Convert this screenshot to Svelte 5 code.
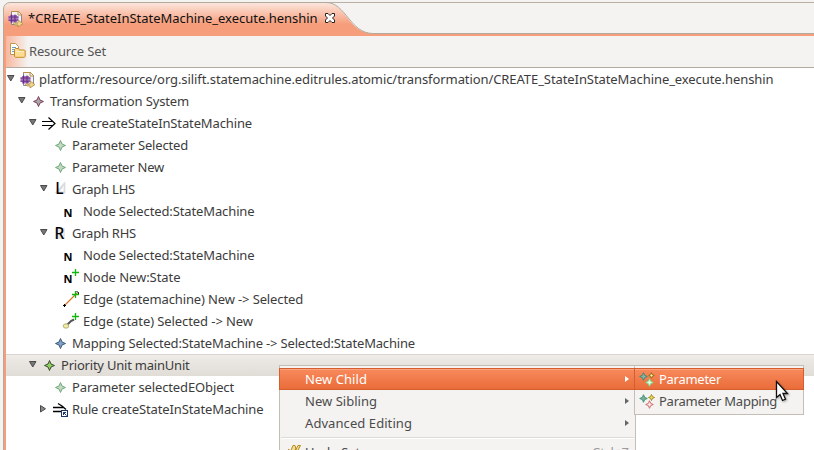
<script>
  const rows = [
    { level: 0, arrow: 'open', icon: 'file', text: 'platform:/resource/org.silift.statemachine.editrules.atomic/transformation/CREATE_StateInStateMachine_execute.henshin', end: 772.5 },
    { level: 1, arrow: 'open', icon: 'system', text: 'Transformation System', end: 188 },
    { level: 2, arrow: 'open', icon: 'rule', text: 'Rule createStateInStateMachine', end: 251 },
    { level: 3, icon: 'param', text: 'Parameter Selected', end: 187 },
    { level: 3, icon: 'param', text: 'Parameter New', end: 163 },
    { level: 3, arrow: 'open', icon: 'lhs', text: 'Graph LHS', end: 134 },
    { level: 4, icon: 'node', text: 'Node Selected:StateMachine', end: 253.5 },
    { level: 3, arrow: 'open', icon: 'rhs', text: 'Graph RHS', end: 135 },
    { level: 4, icon: 'node', text: 'Node Selected:StateMachine', end: 253.5 },
    { level: 4, icon: 'nodeNew', text: 'Node New:State', end: 179.5 },
    { level: 4, icon: 'edge', text: 'Edge (statemachine) New -> Selected', end: 302 },
    { level: 4, icon: 'edgeState', text: 'Edge (state) Selected -> New', end: 252 },
    { level: 3, icon: 'mapping', text: 'Mapping Selected:StateMachine -> Selected:StateMachine', end: 414 },
    { level: 2, arrow: 'open', icon: 'unit', text: 'Priority Unit mainUnit', end: 188.5, selected: true },
    { level: 3, icon: 'param', text: 'Parameter selectedEObject', end: 233 },
    { level: 3, arrow: 'closed', icon: 'ruleRef', text: 'Rule createStateInStateMachine', end: 262.5 }
  ];

  const diamonds = {
    system: ['#7e4058', '#aaa6aa'],
    param: ['#6fab78', '#c3d9c4'],
    mapping: ['#3f5877', '#7fa0c6'],
    unit: ['#3d4a38', '#8fcf5c']
  };

  // Spreads the letters of a label over a fixed width.
  function fit(node, width) {
    const apply = () => {
      node.style.letterSpacing = '0px';
      const natural = node.getBoundingClientRect().width;
      node.style.letterSpacing = (width - natural) / node.textContent.length + 'px';
    };
    apply();
    document.fonts?.ready.then(apply);
  }
</script>

{#snippet plus(x, y)}
  <path d="M{x - 3.5} {y}h7M{x} {y - 3.5}v7" stroke="#12b60c" stroke-width="1.3" fill="none" />
{/snippet}

{#snippet star(x, y, r, stroke, fill)}
  <path
    d="M{x} {y - r}l{r * 0.3} {r * 0.7} {r * 0.7} {r * 0.3}-{r * 0.7} {r * 0.3}-{r * 0.3} {r * 0.7}-{r * 0.3}-{r * 0.7}-{r * 0.7}-{r * 0.3} {r * 0.7}-{r * 0.3}z"
    {fill} {stroke} stroke-width="1" />
{/snippet}

{#snippet fileGlyph()}
  <path d="M5.5 4.5h7l3 3v10h-10z" fill="#f3f3f6" stroke="#8b8794" />
  <path d="M12 4.5v3.5h3.5M5.5 4.5h7l3 3" fill="none" stroke="#b89044" />
  <path d="M4 8h7v1.5h1.5v4h-1.5v2h-7v-2h-1.5v-4h1.5z" fill="#a878bc" />
  <path d="M5.5 7.5v8M9 7.5v8M2.5 10h10M2.5 13.2h10" stroke="#663088" stroke-width="1.1" />
  <path d="M8.5 15.5q1 1.5 3.5 .5v-3l5 3.6-5 3.4v-2q-3.5.5-4.5-1.5z" fill="#efd58c" stroke="#ae8b45" stroke-width=".8" />
{/snippet}

{#snippet icon(name)}
  <svg class="icon" width="21" height="22" viewBox="0 0 21 22">
    {#if name === 'file'}
      {@render fileGlyph()}
    {:else if diamonds[name]}
      {@render star(9.5, 11.5, 5, diamonds[name][0], diamonds[name][1])}
    {:else if name === 'rule'}
      <path d="M2 9.5h11M2 13.5h11M8.5 5.5l6.500 6-6.500 6" fill="none" stroke="#000" stroke-width="1.2" />
    {:else if name === 'ruleRef'}
      <path d="M2 9.500h11M2 13.500h8M7 5.500l4 2.500 4 3.500" fill="none" stroke="#000" stroke-width="1.300" />
      <rect x="10.500" y="12.500" width="6" height="6" fill="#fff" stroke="#193764" />
      <path d="M12.500 17v-2.500h2.500M12.500 14.500l3 3" fill="none" stroke="#193764" />
    {:else if name === 'lhs'}
      <path d="M4.500 15l9-9.500v9h-7l5-6" fill="none" stroke="#dcdcdc" stroke-width="1.800" />
      <text x="4.200" y="16" class="letter big">L</text>
    {:else if name === 'rhs'}
      <path d="M4 6h10v11h-10z" fill="#e9e9e9" />
      <text x="3.400" y="17" class="letter big">R</text>
    {:else if name === 'node'}
      <text x="1.600" y="17" class="letter">N</text>
    {:else if name === 'nodeNew'}
      <text x="1.600" y="17" class="letter">N</text>
      {@render plus(13.5, 6.5)}
    {:else if name === 'edge'}
      <path d="M2.500 17.500L15 5" stroke="#dc6f21" stroke-width="1.100" />
      <path d="M1 17.500h3M2.500 16v3M14.500 3.500l2 1v1.500" stroke="#000" fill="none" />
      {@render plus(13.5, 6.5)}
    {:else if name === 'edgeState'}
      <path d="M5 15l4-4 3-1.500" stroke="#555" stroke-width="2" fill="none" />
      <ellipse cx="4" cy="16" rx="2.800" ry="2.200" fill="#f1eba2" stroke="#aaa367" stroke-width=".8" />
      {@render plus(13.5, 6.5)}
    {/if}
  </svg>
{/snippet}

<div class="window">
  <header class="tabs">
    <svg class="tabshape" width="814" height="36" viewBox="0 0 814 36">
      <defs>
        <linearGradient id="tab" x1="0" y1="3" x2="0" y2="24" gradientUnits="userSpaceOnUse">
          <stop offset="0" stop-color="#fce5dc" />
          <stop offset="1" stop-color="#f69e7c" />
        </linearGradient>
      </defs>
      <path d="M9 2.500H814" stroke="#b8b0a4" />
      <path d="M4 36V9Q4 3 10 3H328C345 3 349 33 372 33.500H814V36z" fill="url(#tab)" />
      <path d="M3.500 36V9Q4 3 10 2.500H326C346 2.500 350 33.500 373 33.500H814" fill="none" stroke="#b3aa9e" />
    </svg>
    <div class="tab">
      <svg width="21" height="22" viewBox="0 0 21 22">{@render fileGlyph()}</svg>
      <span class="title" use:fit={289.5}>*CREATE_StateInStateMachine_execute.henshin</span>
      <svg class="close" width="12" height="12" viewBox="0 0 12 12">
        <path d="M1.500 1.500h2.500l2 2 2-2h2.500v2.500l-2 2 2 2v2.500h-2.500l-2-2-2 2h-2.500v-2.500l2-2-2-2z" fill="#fff" stroke="#222" />
      </svg>
    </div>
  </header>

  <main class="editor">
    <div class="caption">
      <svg width="16" height="18" viewBox="0 0 16 18">
        <path d="M.5 1.500h5l3 3v8h-8z" fill="#fff" stroke="#c09a4b" />
        <path d="M2 5.500h4M2 7.500h3M2 9.500h2" stroke="#6b9bbd" />
        <path d="M4.500 14.500v-7l1-1h3l1 1.500h5l.7.8v5.700l-.7.8h-9z" fill="#fbdc92" stroke="#c58a28" />
        <path d="M5.500 9.500h8.500" stroke="#fff0c8" />
      </svg>
      <span use:fit={77}>Resource Set</span>
    </div>
    <div class="tree">
      {#each rows as row}
        <div class="row" class:selected={row.selected} style="padding-left: {row.level * 11}px">
          <svg class="arrow" width="12" height="22" viewBox="0 0 12 22">
            {#if row.arrow === 'open'}
              <path d="M1.500 7.500h6.500l-3.250 5.500z" fill="#777" stroke="#4b4b4b" />
            {:else if row.arrow === 'closed'}
              <path d="M1.500 7.500v6.500l5-3.250z" fill="#888" stroke="#4b4b4b" />
            {/if}
          </svg>
          {@render icon(row.icon)}
          <span use:fit={row.end - 38 - row.level * 11}>{row.text}</span>
        </div>
      {/each}
    </div>
  </main>

  <div class="menu context">
    <div class="item active"><span use:fit={62}>New Child</span><i></i></div>
    <div class="item"><span use:fit={72}>New Sibling</span><i></i></div>
    <div class="item"><span use:fit={107}>Advanced Editing</span><i></i></div>
    <hr />
    <div class="item undo">
      <svg width="16" height="16" viewBox="0 0 16 16">
        <path d="M1.500 6v7h7l-2-2.500 2-4.500 1.500 3 3.500-6.500h-2.500l-2 4-1-4h-2l-2.500 6z" fill="#f5df94" stroke="#b78a22" />
      </svg>
      <span use:fit={55}>Undo Set</span>
      <span class="key" use:fit={37}>Ctrl+Z</span>
    </div>
  </div>

  <div class="menu sub">
    <div class="item active">
      <svg width="18" height="22" viewBox="0 0 18 22">
        {@render star(4.5, 8.5, 3.8, '#3f8a78', '#8fb5a4')}
        {@render star(12.5, 7.5, 2.8, '#8b6d16', '#fff0a0')}
        {@render star(10.5, 14.5, 3.8, '#7ae08c', '#e8ffe8')}
      </svg>
      <span use:fit={62}>Parameter</span>
    </div>
    <div class="item">
      <svg width="18" height="22" viewBox="0 0 18 22">
        {@render star(4.5, 8.5, 3.8, '#3f9a7b', '#83a89b')}
        {@render star(12.5, 7.5, 3, '#a18a20', '#f3dc62')}
        {@render star(10.5, 14.5, 3.8, '#cf6c6c', '#fbeaea')}
      </svg>
      <span use:fit={118}>Parameter Mapping</span>
    </div>
  </div>

  <svg class="cursor" width="16" height="24" viewBox="0 0 16 24">
    <path d="M1.500 1.500v16l3.500-3 2.500 6 3-1.300-2.500-5.700h4.500z" fill="#fff" stroke="#111" stroke-width="1.300" />
  </svg>
</div>

<style>
  :global(body) { margin: 0; overflow: hidden; }
  .window {
    position: relative;
    width: 814px;
    height: 450px;
    overflow: hidden;
    background: #f4f3f1;
    color: #3c3c3c;
    font: 13px/22px "Noto Sans", "Open Sans", sans-serif;
    white-space: nowrap;
    display: flex;
    flex-direction: column;
  }
  svg { display: block; flex: none; }
  .tabs { position: relative; height: 36px; flex: none; }
  .tabshape { position: absolute; left: 0; top: 0; }
  .tab {
    position: relative;
    display: flex;
    height: 22px;
    padding: 7px 0 0 6px;
    color: #111;
  }
  .title { margin-left: 1px; flex: none; }
  .close { margin: 5px 0 0 6px; }
  .editor {
    flex: 1;
    display: flex;
    flex-direction: column;
    border-left: 1px solid #b3aa9e;
    margin-left: 3px;
    box-shadow: inset 2px 0 #f69e7c;
    padding-left: 2px;
  }
  .caption {
    height: 31px;
    flex: none;
    border-bottom: 1px solid #b3aba0;
    display: flex;
    padding-left: 4px;
    background: linear-gradient(90deg, #f8b79d 0, #f4f3f1 22px);
    color: #555;
  }
  .caption svg { margin-top: 6px; }
  .caption span { margin: 4px 0 0 3px; }
  .tree { flex: 1; background: #fff; }
  .row { display: flex; height: 22px; }
  .row.selected {
    background: linear-gradient(#efece9, #e0dcd6);
    box-shadow: inset 0 1px #dbd7d0;
  }
  .letter { font: bold 11px "Open Sans", sans-serif; fill: #000; }
  .big { font: 500 15.500px "Noto Sans", sans-serif; }
  .menu {
    position: absolute;
    box-sizing: border-box;
    background: #f4f3f1;
    border: 1px solid #c5beb5;
    padding-top: 2px;
    color: #4b4b4b;
  }
  .context { left: 279px; top: 365px; width: 357px; height: 100px; }
  .sub { left: 634px; top: 365px; width: 170px; height: 50px; }
  .item {
    box-sizing: border-box;
    display: flex;
    justify-content: space-between;
    height: 22px;
    padding: 0 6px 0 25px;
  }
  .sub .item { justify-content: flex-start; padding: 0 0 0 4px; }
  .sub .item span { margin-left: 2px; }
  .item.active {
    margin: 0 -1px;
    padding-left: 26px;
    padding-right: 7px;
    background: linear-gradient(#f98b5e, #e96b38);
    box-shadow: inset 0 0 0 1px #d55e2d, inset 0 2px #fba37f;
    color: #fff;
  }
  .sub .item.active { padding-left: 5px; }
  .item i {
    align-self: center;
    border: 3.500px solid transparent;
    border-left: 4px solid #666;
    border-right: 0;
  }
  .active i { border-left-color: #fff; }
  hr {
    height: 1px;
    margin: 3px 1px 2px;
    border: 0;
    background: #dedad4;
    box-shadow: 0 1px #fff;
  }
  .item.undo { justify-content: flex-start; padding-left: 7px; }
  .undo svg { margin: 3px 2px 0 0; }
  .undo span { margin-top: 1px; }
  .undo .key { margin-left: auto; color: #9b9b9b; }
  .cursor { position: absolute; left: 775px; top: 380px; filter: drop-shadow(1px 1px 1px #0005); }
</style>
